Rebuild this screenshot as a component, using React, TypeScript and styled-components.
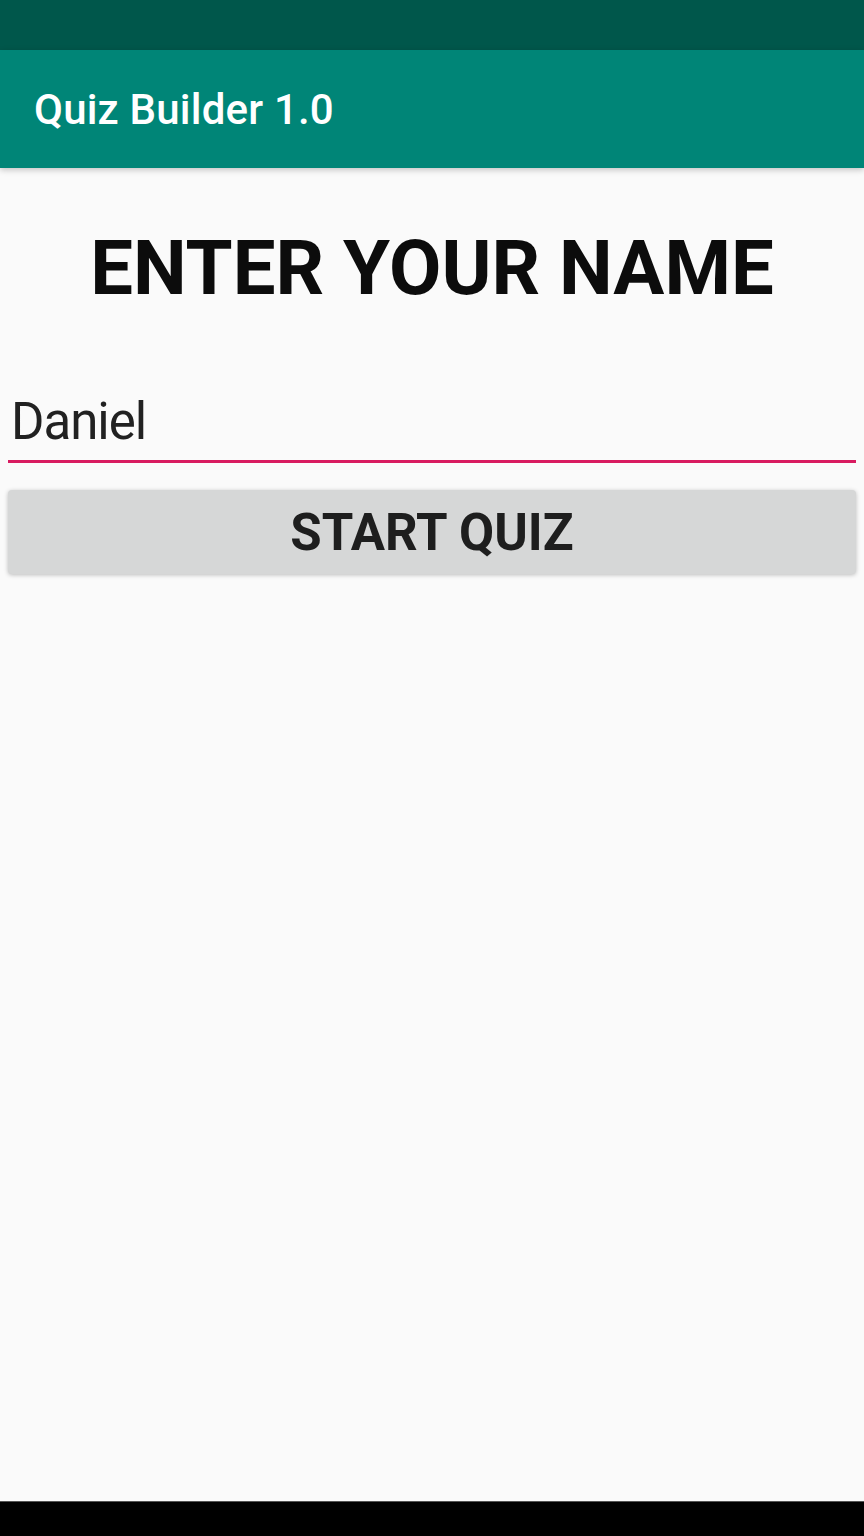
import React from "react";
import styled, { createGlobalStyle } from "styled-components";

const Global = createGlobalStyle`
  html, body { margin: 0; padding: 0; background: #fafafa; }
  body { font-family: Roboto, "Noto Sans", sans-serif; }
`;

const Screen = styled.div`
  width: 864px;
  height: 1536px;
  display: flex;
  flex-direction: column;
  background: #fafafa;
  overflow: hidden;
`;

const StatusBar = styled.div`
  height: 50px;
  flex: none;
  background: #00574b;
`;

const AppBar = styled.header`
  height: 118px;
  flex: none;
  background: #008577;
  display: flex;
  align-items: center;
  padding-left: 34px;
  box-shadow: 0 2px 6px rgba(0, 0, 0, 0.22);
  position: relative;
  z-index: 1;
`;

const AppTitle = styled.h1`
  margin: 0;
  color: #ffffff;
  font-family: Roboto, sans-serif;
  font-weight: 500;
  font-size: 42px;
  letter-spacing: 0.2px;
`;

const Content = styled.main`
  flex: 1;
  display: flex;
  flex-direction: column;
  padding: 0 8px;
`;

const Heading = styled.h2`
  margin: 52px 0 0;
  text-align: center;
  font-family: Roboto, sans-serif;
  font-weight: 700;
  font-size: 76px;
  line-height: 96px;
  color: #0c0c0c;
`;

const NameInput = styled.input`
  margin-top: 74px;
  border: none;
  border-bottom: 3px solid #d81b60;
  background: transparent;
  outline: none;
  font-family: Roboto, sans-serif;
  font-size: 51px;
  letter-spacing: -1px;
  color: #212121;
  padding: 0 0 6px 3px;
  height: 64px;
  line-height: 64px;
`;

const Button = styled.button`
  margin-top: 27px;
  height: 84px;
  border: none;
  border-radius: 4px;
  background: #d6d7d7;
  box-shadow: 0 1px 4px rgba(0, 0, 0, 0.25);
  font-family: Roboto, sans-serif;
  font-weight: 700;
  font-size: 51px;
  color: #1e1e1e;
  padding: 0;
`;

const NavBar = styled.div`
  height: 34px;
  flex: none;
  background: #000;
  border-top: 1px solid #555;
`;

export default function App() {
  return (
    <>
      <Global />
      <Screen>
        <StatusBar />
        <AppBar>
          <AppTitle>Quiz Builder 1.0</AppTitle>
        </AppBar>
        <Content>
          <Heading>ENTER YOUR NAME</Heading>
          <NameInput defaultValue="Daniel" />
          <Button>START QUIZ</Button>
        </Content>
        <NavBar />
      </Screen>
    </>
  );
}
